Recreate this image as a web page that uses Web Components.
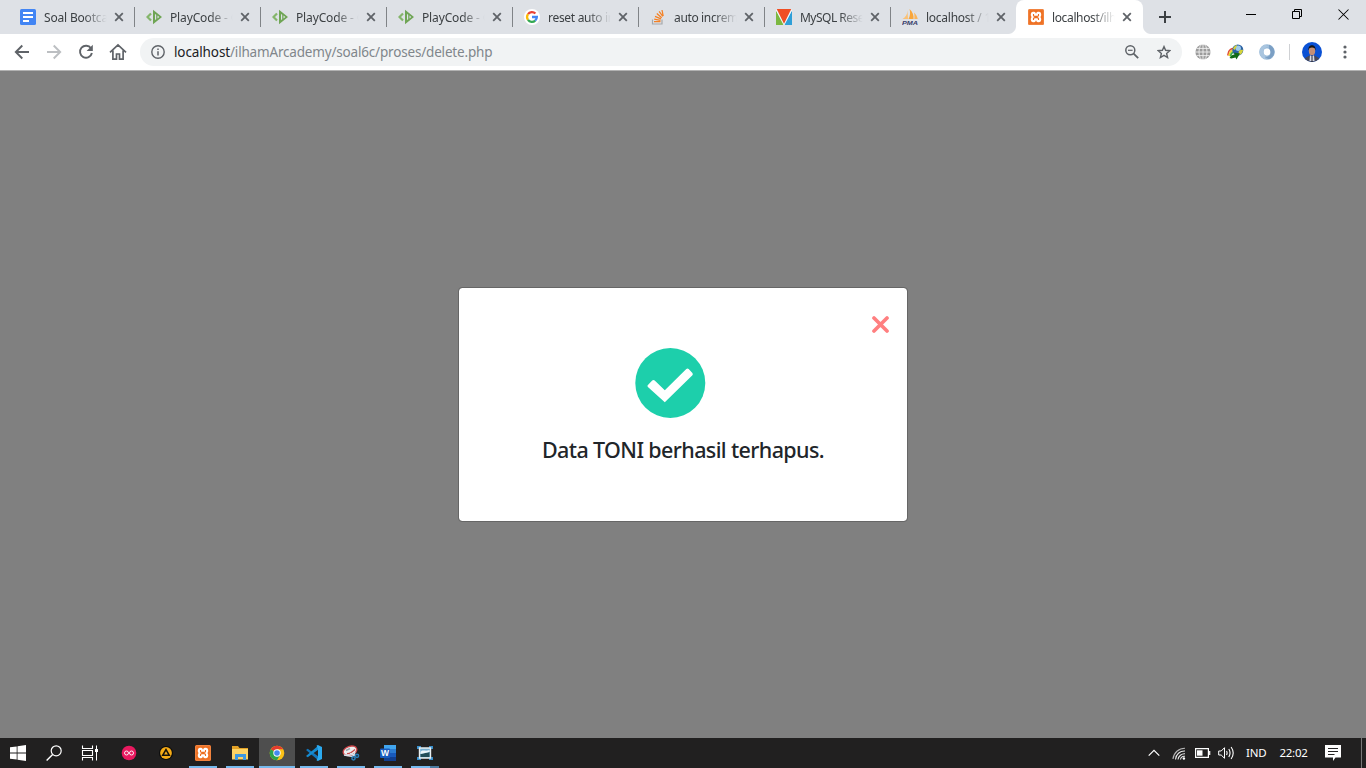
<!DOCTYPE html>
<html lang="id">
<head>
<meta charset="utf-8">
<title>localhost/ilhamArcademy</title>
<style>
html,body{margin:0;height:100%;overflow:hidden}
body{font-family:"Noto Sans","Open Sans",sans-serif;}
</style>
</head>
<body>
<desktop-screen></desktop-screen>
<script>
const ICONS = {
docs:[16,16,'<rect width="16" height="16" rx="1.5" fill="#4285f4"/><path d="M3 3h10v2H3zM3 7h10v2H3zM3 11h6v2H3z" fill="#fff"/>'],
playcode:[16,16,'<path d="M5 4.500L1.500 8 5 11.500" fill="none" stroke="#84b56a" stroke-width="2.200"/><path fill-rule="evenodd" d="M7 .8L16 8 7 15.200zM9 5v6l1.200-.8V5.800zM11.500 6.600v2.800L13.300 8z" fill="#6fa555"/>'],
google:[16,16,'<circle cx="8" cy="8" r="8" fill="#fff"/><g fill="none" stroke-width="2.3"><path d="M4 5.200A4.850 4.850 0 0 1 11.400 4.500" stroke="#ea4335"/><path d="M4 5.200A4.850 4.850 0 0 0 4 10.800" stroke="#fbbc05"/><path d="M4 10.800A4.850 4.850 0 0 0 11.200 11.600" stroke="#34a853"/><path d="M11.200 11.600A4.850 4.850 0 0 0 12.850 8H8" stroke="#4285f4"/></g>'],
stack:[16,16,'<path d="M2.500 10.500v4.500h9.500V10.500" fill="none" stroke="#a5a8ab" stroke-width="1.200"/><g stroke="#f48024" stroke-width="1.250"><path d="M4 12.700h6.500M4.200 10.200l6.300 1.100M5 7.300l6 2.500M6.800 4.600l4.900 4.100M9.100 2.300l3.700 5M12 1l1.200 6"/></g>'],
mysql:[16,16,'<path d="M0 1.500L8 16H0z" fill="#7cb841"/><path d="M16 1.500L8 16h8z" fill="#2f9fd8"/><path d="M.8 0h14.400L8 15z" fill="#f04e23"/><path d="M0 .5L8 16 16 .5" fill="none" stroke="#fff" stroke-width=".8"/>'],
pma:[16,16,'<path d="M5.500 1.500c0 4-2 6.500-5 8.500L6 10z" fill="#fac176"/><path d="M7.500 0c3.200 3 4.500 6.500 4 10H6.500C8.300 7 8.500 3 7.500 0z" fill="#f9a63a"/><path d="M12 3.500c2 2 3.300 4 3.700 6.500H12.300c.3-2 .2-4-.3-6.500z" fill="#fab45a"/><text x="0" y="15.500" textLength="16" lengthAdjust="spacingAndGlyphs" font-family="Liberation Sans" font-style="italic" font-weight="700" font-size="6.200" fill="#353b69">PMA</text>'],
xampp:[16,16,'<rect width="16" height="16" rx="1.500" fill="#ee6f20"/><rect x=".7" y=".7" width="14.600" height="14.600" rx="1" fill="none" stroke="#f59a61" stroke-width=".6"/><path d="M4.800 2.800h1.400Q7.400 2.900 8 4.800 8.600 2.900 9.800 2.800h1.400Q13.200 3 13.200 5v1.200Q13.100 7.300 12.400 8q.8.800.8 2v1q-.1 2-2 2.200H9.800Q8.500 13.100 8 11.200q-.5 1.900-1.800 2H4.800Q2.900 13 2.800 11v-1q0-1.200.8-2-.7-.7-.8-1.800V5Q2.900 3 4.800 2.800z" fill="#fff"/><path d="M5.500 5v1.600Q6 7.400 7 7.400h2q1 0 1.500-.8V5M5.500 11V9.500Q6 8.700 7 8.600h2q1 .1 1.500.9V11" fill="none" stroke="#ee6f20" stroke-width="1.100"/>'],
close:[10,10,'<path d="M1.200 1.200l7.600 7.600M8.800 1.200L1.200 8.800" stroke="#5f6368" stroke-width="1.800"/>'],
plus:[12,12,'<path d="M6 0v12M0 6h12" stroke="#3c4043" stroke-width="2"/>'],
min:[10,10,'<path d="M0 5.500h10" stroke="#000"/>'],
restore:[10,10,'<path d="M.5 2.500h7v7h-7zM2.500 2.500V.5h7v7h-2" fill="none" stroke="#000"/>'],
wclose:[11,11,'<path d="M.5.500l10 10M10.500.500l-10 10" stroke="#000" stroke-width="1.050"/>'],
back:[16,16,'<path d="M15 8H2M8.300 1.500L1.800 8l6.500 6.500" fill="none" stroke="#5f6368" stroke-width="1.900"/>'],
forward:[16,16,'<path d="M1 8h13M7.700 1.500L14.200 8l-6.500 6.500" fill="none" stroke="#bcbfc2" stroke-width="1.900"/>'],
reload:[16,16,'<path d="M13 4.300A6 6 0 1 0 13.900 9" fill="none" stroke="#5f6368" stroke-width="1.900"/><path d="M14.800.800v6.200H8.600z" fill="#5f6368"/>'],
home:[18,18,'<path d="M1 9.300L9 1.800l8 7.500M3.900 7.500V16.200h3.600v-5.200h3v5.200h3.600V7.500" fill="none" stroke="#5f6368" stroke-width="1.700"/>'],
info:[14,14,'<circle cx="7" cy="7" r="6.200" fill="none" stroke="#5f6368" stroke-width="1.400"/><path d="M7 6.200v4.300M7 3.500v1.500" stroke="#5f6368" stroke-width="1.500"/>'],
zoom:[14,14,'<circle cx="5.300" cy="5.300" r="4.500" fill="none" stroke="#5f6368" stroke-width="1.500"/><path d="M3 5.300h4.600" stroke="#5f6368" stroke-width="1.200"/><path d="M8.600 8.600l4.600 4.600" stroke="#5f6368" stroke-width="1.800"/>'],
star:[14,14,'<path d="M7 1.600l1.600 3.700 4.200.4-3.200 2.700 1 4.100L7 10.300l-3.600 2.200 1-4.100L1.200 5.700l4.200-.4z" fill="none" stroke="#5f6368" stroke-width="1.400"/>'],
globe:[16,16,'<circle cx="8" cy="8" r="7.600" fill="#9b9b9b"/><g fill="none" stroke="#f0f0f0" stroke-width=".9"><path d="M8 0v16M0 8h16M1.500 4.400h13M1.500 11.600h13"/><ellipse cx="8" cy="8" rx="4" ry="8"/></g>'],
idm:[17,16,'<path d="M1 11.500C.5 6 5 3.500 9 5" fill="none" stroke="#df4b38" stroke-width="1.600"/><path d="M2.300 12C2 8 5 5.500 9 6.500" fill="none" stroke="#f0d530" stroke-width="1.800"/><path d="M3.600 12.500C3.800 9 6 7.500 9 8" fill="none" stroke="#3fae4a" stroke-width="1.800"/><circle cx="10.800" cy="6" r="5.500" fill="#2c62a5"/><circle cx="11.200" cy="4.200" r="2.700" fill="#9ecbea"/><path d="M6 4.500c1.500-3 3-3.500 4-3.500-.5 2-1 3-2.500 5zM11.500 8c1-2 2.500-2.500 4.600-2C15.500 9 14 10.500 12.500 11z" fill="#d6d43a"/><path d="M2.500 14c2-3 3-3.500 5-3.500l-.3-2L13 9.500 9.500 15.500 8.500 13.500c-2 .3-3.500 1.500-6 .5z" fill="#126b17"/>'],
swirl:[16,16,'<circle cx="8" cy="8" r="5.600" fill="none" stroke="#9abbd9" stroke-width="4.400"/><path d="M6 15.300C-1 13-1.500 3.500 6 .8L10 2.500C4 3 3 9 6 11z" fill="#a9c5df"/><path d="M10 .8c7 2 7.500 11.500 0 14.500L6 13.500c6-.5 7-6.500 4-8.500z" fill="#7b9fc4"/><ellipse cx="8" cy="8" rx="3" ry="3.300" fill="#fff"/>'],
avatar:[20,20,'<clipPath id="a"><circle cx="10" cy="10" r="10"/></clipPath><g clip-path="url(#a)"><path d="M0 0h20v20H0z" fill="#0b51d4"/><path d="M3 20v-4l4.500-2.500h5L17 16v4z" fill="#46485a"/><path d="M8 13l2 2 2-2 .5 6h-5z" fill="#d9dbe5"/><path d="M9.500 14.800h1V20h-1z" fill="#272933"/><ellipse cx="10" cy="8.800" rx="3.200" ry="4.500" fill="#c58f75"/><path d="M6.500 8.500c-1-7 8-7 7 0L12.700 6.200Q10 5 7.300 6.200z" fill="#151515"/></g>'],
dots:[4,14,'<circle cx="2" cy="2" r="1.600"/><circle cx="2" cy="7" r="1.600"/><circle cx="2" cy="12" r="1.600"/>'],
cross:[17,17,'<path d="M2 2l13 13M15 2L2 15" stroke="#ff7f80" stroke-width="3.700" stroke-linecap="round"/>'],
check:[71,70,'<circle cx="35.300" cy="35" r="35" fill="#1dcfab"/><path d="M12.700 37.300L17.200 32.600Q18.500 31.500 19.700 32.600L29.800 42.200 51.300 21Q52.500 20.100 53.700 21L57.400 24.900Q58.300 26 57.400 27.200L29.800 54.300 12.900 38.900Q12.100 38.100 12.700 37.300z" fill="#fff"/>'],
win:[16,16,'<path d="M0 2.300L6.700 1.400v6.200H0zM7.500 1.300L16 0v7.600H7.500zM0 8.400h6.700v6.200L0 13.700zM7.500 8.400H16V16l-8.500-1.300z" fill="#fff"/>'],
search:[16,16,'<circle cx="10.200" cy="5.800" r="5" fill="none" stroke="#fff" stroke-width="1.200"/><path d="M6.600 9.400L.6 15.400" stroke="#fff" stroke-width="1.400"/>'],
task:[18,16,'<path d="M1.500.5v3h10v-3M1.500 15.500v-3h10v3M1.500 5.500h10v5h-10z" fill="none" stroke="#fff" stroke-width="1.100"/><path d="M15.500.5v15" stroke="#fff"/><path d="M14 4h3v3h-3z" fill="#fff"/>'],
pink:[16,16,'<circle cx="8" cy="8" r="7.300" fill="#e9195f"/><g fill="none" stroke="#fff" stroke-width=".9"><circle cx="5.500" cy="8" r="2"/><circle cx="10.500" cy="8" r="2"/></g>'],
aimp:[16,16,'<circle cx="8" cy="8" r="7" fill="#0b0b0b"/><circle cx="8" cy="8" r="5.900" fill="#f5ab16"/><path d="M8 4.700L11.200 10.200H4.800z" fill="none" stroke="#15110a" stroke-width="1.600"/>'],
folder:[18,16,'<path d="M1 1h6l1.500 2H17v3H1z" fill="#e2a126"/><path d="M1 4h16v10.500H1z" fill="#fdd364"/><path d="M4 15V9h11v6h-3v-3H7v3z" fill="#3d98df"/>'],
chrome:[16,16,'<circle cx="8" cy="8" r="7.300" fill="#fbc116"/><path d="M8 8L1.700 4.350A7.300 7.300 0 0 1 14.300 4.350H8z" fill="#e33b2e"/><path d="M8 8L1.700 4.350A7.300 7.300 0 0 0 8 15.300L11.200 9.800z" fill="#2ba24c"/><circle cx="8" cy="8" r="3.700" fill="#fff"/><circle cx="8" cy="8" r="2.800" fill="#4389ef"/>'],
code:[16,16,'<path d="M0 5L1.700 3.700 12.500 11.500V15.500z" fill="#1276bb"/><path d="M0 11L1.700 12.300 12.500 4.500V.5z" fill="#168bd0"/><path d="M11.800 0L16 2v12l-4.200 2-1.300-.8 1.500-3V3.800l-1.500-3z" fill="#2baaf0"/>'],
snip:[18,16,'<ellipse cx="8" cy="5.800" rx="7" ry="4.500" transform="rotate(-18 8 5.800)" fill="#eceeef" stroke="#d04549" stroke-width="1.300"/><path d="M5 8.500Q8 9 13 4.500" stroke="#c84749" stroke-width="1.300" fill="none"/><path d="M4 5.500l4-2" stroke="#9aa5ab" stroke-width="1.500"/><path d="M2 10l9 1.500M8 8.500l5 2M13 7l-1.500 4" stroke="#d7e3ec" stroke-width="1.400"/><circle cx="11.500" cy="13.300" r="1.600" fill="none" stroke="#287db7" stroke-width="1.500"/><circle cx="15" cy="10.800" r="1.600" fill="none" stroke="#287db7" stroke-width="1.500"/>'],
word:[16,16,'<path d="M4 0h12v16H4z" fill="#2b7cd3"/><path d="M4 0h12v4H4z" fill="#41a5ee"/><path d="M4 8h12v4H4z" fill="#185abd"/><path d="M4 12h12v4H4z" fill="#103f91"/><rect y="3.500" width="10" height="9.500" rx="1" fill="#185abd"/><text x="5" y="11.200" text-anchor="middle" font-family="Liberation Sans" font-size="8.500" font-weight="700" fill="#fff">W</text>'],
photo:[18,16,'<path d="M1 1h4v3H1zM13 1h4v3h-4zM1 12h4v3H1zM13 12h4v3h-4z" fill="#398fcc"/><path d="M3.500 3h11v10h-11z" fill="#75afd2" stroke="#e8eef0" stroke-width="1.400"/><path d="M4.500 9l5-1 4-1v5h-9z" fill="#214d58"/><path d="M4.500 7c2-3 5 0 9-2v2l-9 2z" fill="#eaf4f8"/>'],
up:[12,8,'<path d="M.7 6.700L6 1.400l5.300 5.300" fill="none" stroke="#fff" stroke-width="1.200"/>'],
wifi:[14,14,'<g fill="none" stroke="#e8e8e8" stroke-width="1.100"><path d="M1 13A12 12 0 0 1 13 2.200" opacity=".75"/><path d="M3.500 13.500A9 9 0 0 1 13 5"/><path d="M6 13.500A6.500 6.500 0 0 1 13 7.800"/><path d="M8.500 13.500A4 4 0 0 1 13 10.300"/></g><circle cx="11.900" cy="12.500" r="1.200" fill="#fff"/>'],
battery:[16,10,'<path d="M.6.600h12.800v8.800H.6zM14.700 3v4" fill="none" stroke="#fff" stroke-width="1.200"/><path d="M2 2.300h5.500v5.400H2z" fill="#fff"/>'],
sound:[17,14,'<path d="M.7 5h2.500l3.300-3.300v10.600L3.200 9H.7z" fill="none" stroke="#fff"/><g fill="none" stroke="#fff" stroke-width="1.100"><path d="M8.500 5q1.200 2 0 4M10.800 3q2.500 4 0 8M13.100 1q4.200 6 0 12"/></g>'],
note:[16,16,'<path d="M0 0h16v12.500H10.500L8 16v-3.500H0z" fill="#fff"/><path d="M3 3.500h10M3 6.500h10M3 9.500h6.500" stroke="#242323" stroke-width="1.200"/>']
};

function define(name, html, setup){
  customElements.define(name, class extends HTMLElement{
    constructor(){ super(); this.attachShadow({mode:'open'}); }
    connectedCallback(){
      const t=document.createElement('template');
      t.innerHTML=typeof html==='function'?html(this):html;
      this.shadowRoot.replaceChildren(t.content.cloneNode(true));
      if(setup) setup(this);
    }
  });
}

define('ui-icon', el=>{
  const [w,h,body]=ICONS[el.getAttribute('name')];
  return `<style>:host{display:block;flex:none;width:${w}px;height:${h}px}svg{display:block}</style><svg width="${w}" height="${h}" viewBox="0 0 ${w} ${h}" fill="#5f6368">${body}</svg>`;
});

/* Label whose tracking is adjusted so the text takes the given advance width. */
define('ui-label', '<style>:host{display:block;flex:none;white-space:pre}span{display:inline-block}</style><span></span>', el=>{
  const s=el.shadowRoot.querySelector('span'), text=el.getAttribute('text');
  s.textContent=text;
  const w=parseFloat(el.getAttribute('fit'));
  if(w) s.style.letterSpacing=((w-s.getBoundingClientRect().width)/text.length)+'px';
});

define('browser-tab', el=>`<style>
:host{display:flex;position:relative;flex:none;box-sizing:border-box;width:126px;height:34px;align-items:center;padding-left:12px}
:host([divider])::after{content:"";position:absolute;right:-1px;top:7px;width:1px;height:20px;background:#808387}
:host([active]){background:#fff;border-radius:8px 8px 0 0;width:127px}
:host([active])::before,:host([active])::after{content:"";position:absolute;bottom:0;width:8px;height:8px}
:host([active])::before{left:-8px;background:radial-gradient(circle at 0 0,transparent 7.5px,#fff 8.500px)}
:host([active])::after{right:-8px;background:radial-gradient(circle at 100% 0,transparent 7.500px,#fff 8.500px)}
.title{width:64px;margin-left:8px;overflow:hidden;font-size:12px;line-height:17px;color:#3c4043;-webkit-mask:linear-gradient(90deg,#000 62%,transparent 98%);mask:linear-gradient(90deg,#000 62%,transparent 98%)}
.x{margin-left:6px}
</style><ui-icon name="${el.getAttribute('icon')}"></ui-icon><div class="title"><ui-label text="${el.getAttribute('label')}" fit="${el.getAttribute('fit')}"></ui-label></div><ui-icon class="x" name="close"></ui-icon>`);

define('tab-strip', `<style>
:host{display:flex;height:34px;background:#dee1e6;padding-left:8px;align-items:flex-start}
.new{margin:11px 0 0 16px}
.win{display:flex;margin-left:auto;padding:9px 17px 0 0;gap:36px}
</style><slot></slot><ui-icon class="new" name="plus"></ui-icon><div class="win"><ui-icon name="min"></ui-icon><ui-icon name="restore"></ui-icon><ui-icon name="wclose"></ui-icon></div>`);

define('address-bar', `<style>
:host{display:flex;box-sizing:border-box;flex:1;height:28px;margin-left:13px;border-radius:14px;background:#f1f3f4;align-items:center;padding:0 11px;font-size:13.500px;color:#80868b}
.host{color:#202124;margin-left:9px}
.r{display:flex;margin-left:auto;gap:18px;align-items:center}
</style><ui-icon name="info"></ui-icon><ui-label class="host" text="localhost" fit="56"></ui-label><ui-label text="/ilhamArcademy/soal6c/proses/delete.php" fit="262.300"></ui-label><div class="r"><ui-icon name="zoom"></ui-icon><ui-icon name="star"></ui-icon></div>`);

define('browser-toolbar', `<style>
:host{display:flex;box-sizing:border-box;height:37px;background:#fff;border-bottom:1px solid #b2b2b2;align-items:center;padding:0 20px 0 14px}
.nav{display:flex;gap:16px;align-items:center}
.ext{display:flex;align-items:center;gap:16px;margin-left:13px}
i{width:1px;height:16px;background:#cfd1d4;margin:0 -4px 0 -2px}
</style><div class="nav"><ui-icon name="back"></ui-icon><ui-icon name="forward"></ui-icon><ui-icon name="reload"></ui-icon><ui-icon style="margin-left:-1px" name="home"></ui-icon></div><address-bar></address-bar><div class="ext"><ui-icon name="globe"></ui-icon><ui-icon name="idm"></ui-icon><ui-icon style="margin-left:-1px" name="swirl"></ui-icon><i></i><ui-icon name="avatar"></ui-icon></div><ui-icon style="margin:0 -.5px 0 20.500px" name="dots"></ui-icon>`);

define('message-modal', `<style>
:host{display:flex;flex-direction:column;align-items:center;box-sizing:border-box;width:450px;height:235px;background:#fff;background-clip:padding-box;border:1px solid #666;border-radius:4px;color:#212529}
.top{align-self:flex-end;margin:28px 18.500px 0 0}
.ok{margin:15px 26px 0 0}
.msg{font-size:21.500px;font-weight:500;line-height:30px;margin-top:17px}
</style><ui-icon class="top" name="cross"></ui-icon><ui-icon class="ok" name="check"></ui-icon><div class="msg"><slot></slot></div>`);

define('page-view', `<style>:host{display:flex;flex:1;background:#808080;align-items:center;justify-content:center}</style><message-modal><ui-label text="Data TONI berhasil terhapus." fit="282"></ui-label></message-modal>`);

define('task-button', el=>`<style>
:host{display:flex;box-sizing:border-box;flex:none;width:37px;height:30px;align-items:center;justify-content:center;position:relative}
:host([open])::after{content:"";position:absolute;left:4.500px;right:4.500px;bottom:0;height:2px;background:#76b9ed}
:host([current]){width:36px;margin:0 .5px;background:#4e4e4e}
:host([current])::after{left:0;right:0}
:host([stacked])::after{background:linear-gradient(90deg,#76b9ed 68%,#4c7ba1 68%)}
</style><ui-icon name="${el.getAttribute('icon')}"></ui-icon>`);

define('system-tray', `<style>
:host{display:flex;align-items:center;margin-left:auto;height:30px;color:#fff;font-size:11.500px;box-sizing:border-box;padding-right:4px}
.bar{width:1px;height:30px;background:#777;margin-left:20px}
</style><ui-icon name="up"></ui-icon><ui-icon style="margin-left:12px" name="wifi"></ui-icon><ui-icon style="margin-left:9px" name="battery"></ui-icon><ui-icon style="margin-left:7px" name="sound"></ui-icon><ui-label style="margin:-2px 0 0 11px" text="IND" fit="20.500"></ui-label><ui-label style="margin:-2px 0 0 13px" text="22:02" fit="28"></ui-label><ui-icon style="margin-left:17.500px" name="note"></ui-icon><div class="bar"></div>`);

define('task-bar', `<style>:host{display:flex;height:30px;background:#212020;align-items:center}</style>
<task-button style="width:36px" icon="win"></task-button><task-button style="width:36px" icon="search"></task-button><task-button style="width:36px;margin-right:2.500px" icon="task"></task-button><task-button icon="pink"></task-button><task-button icon="aimp"></task-button><task-button open icon="xampp"></task-button><task-button open icon="folder"></task-button><task-button open current icon="chrome"></task-button><task-button open icon="code"></task-button><task-button open icon="snip"></task-button><task-button open icon="word"></task-button><task-button open stacked icon="photo"></task-button><system-tray></system-tray>`);

define('desktop-screen', `<style>:host{display:flex;flex-direction:column;width:1366px;height:768px;overflow:hidden}</style>
<tab-strip>
<browser-tab divider icon="docs" label="Soal Bootca" fit="64"></browser-tab>
<browser-tab divider icon="playcode" label="PlayCode - O" fit="70"></browser-tab>
<browser-tab divider icon="playcode" label="PlayCode - O" fit="70"></browser-tab>
<browser-tab divider icon="playcode" label="PlayCode - O" fit="70"></browser-tab>
<browser-tab divider icon="google" label="reset auto in" fit="67"></browser-tab>
<browser-tab divider icon="stack" label="auto increm" fit="64"></browser-tab>
<browser-tab divider icon="mysql" label="MySQL Rese" fit="64"></browser-tab>
<browser-tab icon="pma" label="localhost / 1" fit="65"></browser-tab>
<browser-tab active icon="xampp" label="localhost/ilh" fit="64"></browser-tab>
</tab-strip>
<browser-toolbar></browser-toolbar>
<page-view></page-view>
<task-bar></task-bar>`);
</script>
</body>
</html>
